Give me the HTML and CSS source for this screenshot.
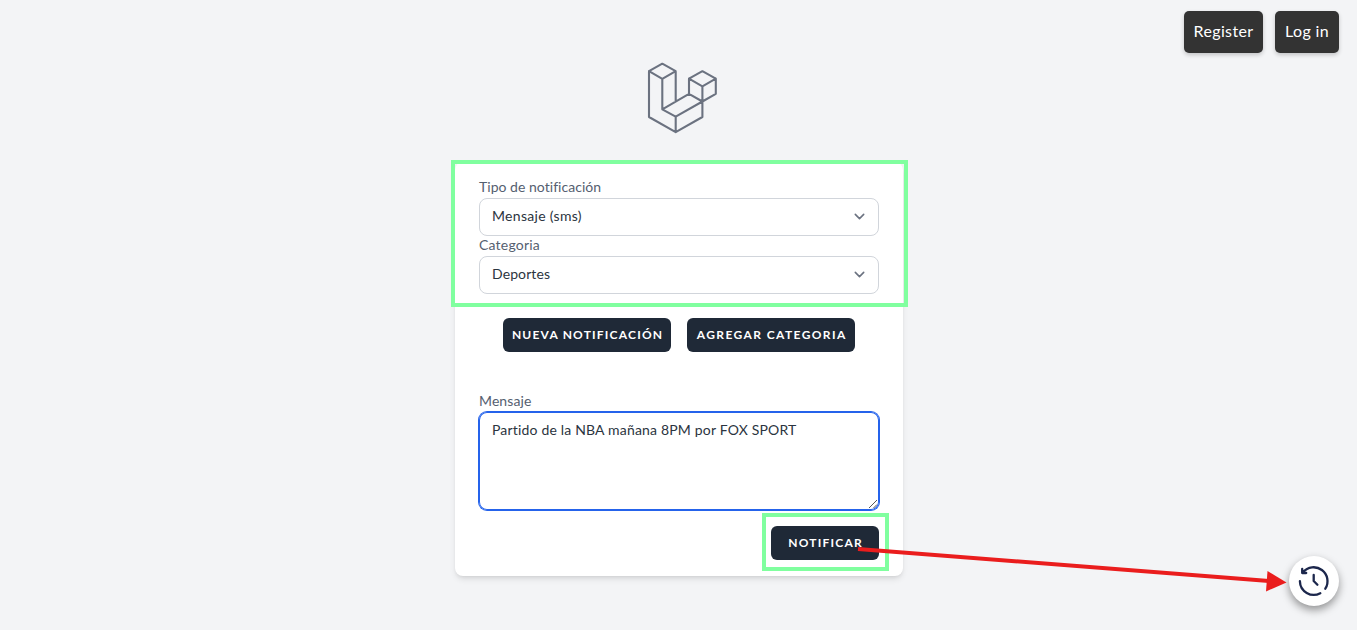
FILE: index.html
```html
<!DOCTYPE html>
<html lang="es">
<head>
<meta charset="utf-8">
<title>Notificaciones</title>
<link rel="stylesheet" href="styles.css">
</head>
<body>
<nav class="auth-nav">
  <a class="auth-link register"><span>Register</span></a>
  <a class="auth-link login"><span>Log in</span></a>
</nav>
<main class="page">
  <svg class="logo" viewBox="0 0 74 74" fill="none" stroke="#6b7280" stroke-width="2.1" stroke-linejoin="round" stroke-linecap="round">
    <path d="M3 9.2 16.3 1.7 29.7 9.2V39.5M3 9.2 16.3 16.9 29.7 9.2M3 9.2V55L29.7 70.2 56.4 55V39.5M16.3 16.9V47.3L29.7 54.7V70.2M16.3 47.3 43 31.8 56.4 39.5 29.7 54.7M43 31.8V16.6L56.4 9.2 69.8 16.6V31.8L56.4 39.5V24.3M43 16.6 56.4 24.3 69.8 16.6"/>
  </svg>
  <form class="card">
    <label class="label tipo"><span>Tipo de notificación</span></label>
    <div class="select"><span class="v-sms">Mensaje (sms)</span><svg class="chevron" viewBox="0 0 20 20"><path d="M6 8l4 4 4-4"/></svg></div>
    <label class="label categoria"><span>Categoria</span></label>
    <div class="select"><span class="v-dep">Deportes</span><svg class="chevron" viewBox="0 0 20 20"><path d="M6 8l4 4 4-4"/></svg></div>
    <div class="actions">
      <div class="button nueva"><span>NUEVA NOTIFICACIÓN</span></div>
      <div class="button agregar"><span>AGREGAR CATEGORIA</span></div>
    </div>
    <label class="label mensaje"><span>Mensaje</span></label>
    <div class="textarea"><span>Partido de la NBA mañana 8PM por FOX SPORT</span>
      <svg class="grip" viewBox="0 0 10 10"><path d="M1 9 9 1M5.5 9 9 5.5"/></svg>
    </div>
    <div class="submit"><div class="button notificar"><span>NOTIFICAR</span></div></div>
  </form>
</main>
<div class="history">
  <svg viewBox="0 0 50 50" fill="none" stroke="#1c274c" stroke-width="2.3" stroke-linecap="round" stroke-linejoin="round">
    <path d="M10.9 25.2A13.9 13.9 0 0 0 31.3 37.2M36.3 32.7A13.9 13.9 0 0 0 14 16.2M13.2 13V17H17.2M24.7 19V25L28.4 28.8"/>
  </svg>
</div>
<div class="highlight highlight-selects"></div>
<div class="highlight highlight-submit"></div>
<svg class="arrow" viewBox="0 0 1357 630"><path d="M858 549 1269 581" stroke="#ea1d1d" stroke-width="4"/><path d="M1267.5 571 1286.5 582.5 1266 591.5Z" fill="#ea1d1d"/></svg>
</body>
</html>
```
FILE: styles.css
```css
* { box-sizing: border-box; }
body {
  margin: 0;
  height: 630px;
  overflow: hidden;
  position: relative;
  background: #f3f4f6;
  font-family: Lato, "Open Sans", sans-serif;
}
.page {
  display: flex;
  flex-direction: column;
  align-items: center;
  padding: 62px 0 0 1px;
}
.logo { width: 74px; height: 74px; margin-left: 7px; }
.card {
  width: 448px;
  height: 414px;
  margin-top: 26px;
  padding: 16px 24px;
  background: #fff;
  border-radius: 8px;
  box-shadow: 0 4px 6px -1px rgba(0,0,0,.1), 0 2px 4px -2px rgba(0,0,0,.1);
}
.label {
  display: block;
  height: 20px;
  font-size: 14px;
  line-height: 17px;
  color: #556070;
  white-space: nowrap;
}
.select {
  display: flex;
  align-items: center;
  justify-content: space-between;
  height: 38px;
  padding: 0 8px 1px 12px;
  border: 1px solid #d1d5db;
  border-radius: 8px;
  font-size: 14px;
  color: #2b3440;
}
.select span { padding-bottom: 2px; }
.chevron { width: 21px; height: 21px; fill: none; stroke: #6b7280; stroke-width: 1.5; stroke-linecap: round; stroke-linejoin: round; }
.actions { display: flex; justify-content: center; gap: 16px; margin: 24px 0 40px; }
.button {
  display: flex;
  align-items: center;
  justify-content: center;
  width: 168px;
  height: 34px;
  padding-bottom: 2px;
  border-radius: 6px;
  background: #1f2937;
  color: #fff;
  font-size: 12px;
  font-weight: 700;
  white-space: nowrap;
}
.textarea {
  position: relative;
  height: 98px;
  padding: 8px 13px;
  border-radius: 8px;
  box-shadow: 0 0 0 1px #2563eb, inset 0 0 0 1px #2563eb;
  font-size: 14px;
  line-height: 19px;
  color: #2b3440;
  white-space: nowrap;
}
.grip { position: absolute; right: 1px; bottom: 1px; width: 10px; height: 10px; fill: none; stroke: #555; stroke-width: 1; }
.submit { display: flex; justify-content: flex-end; margin-top: 16px; }
.notificar { width: 108px; }
.auth-nav { position: absolute; top: 11px; right: 18px; display: flex; gap: 12px; }
.auth-link {
  display: flex;
  align-items: center;
  justify-content: center;
  width: 79px;
  height: 42px;
  padding-bottom: 3px;
  border-radius: 5px;
  background: #333;
  color: #fff;
  font-size: 16px;
  letter-spacing: .35px;
  box-shadow: 0 2px 4px rgba(0,0,0,.2);
  white-space: nowrap;
}
.login { width: 64px; }
.history { position: absolute; left: 1289px; top: 556px; width: 50px; height: 50px; border-radius: 50%; background: #fff; box-shadow: 0 4px 8px rgba(0,0,0,.4); }
.history svg { display: block; width: 50px; height: 50px; }
.highlight { position: absolute; border: 4px solid #80ff9f; }
.highlight-selects { left: 451px; top: 160px; width: 457px; height: 147px; }
.highlight-submit { left: 762px; top: 513px; width: 127px; height: 58px; }
.arrow { position: absolute; left: 0; top: 0; width: 1357px; height: 630px; }
/* per-text tracking */
.tipo span { letter-spacing: .03px; }
.categoria span { letter-spacing: .2px; }
.mensaje span { letter-spacing: .1px; }
.nueva span, .notificar span { letter-spacing: 1.2px; margin-right: -1.2px; }
.agregar span { letter-spacing: 1.4px; margin-right: -1.4px; }
.v-sms { letter-spacing: .3px; }
.v-dep { letter-spacing: .1px; }
.textarea span { letter-spacing: .18px; }
```
